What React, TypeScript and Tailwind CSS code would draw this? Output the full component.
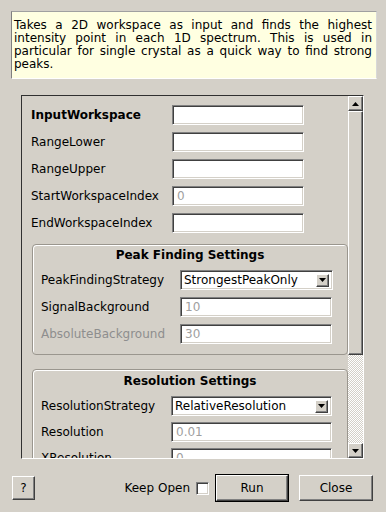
import React from "react";

const sunken =
  "border border-t-[#808080] border-l-[#808080] border-r-white border-b-white shadow-[inset_1px_1px_0_#404040,inset_-1px_-1px_0_#d4d0c8]";
const raised =
  "border border-t-white border-l-white border-r-[#404040] border-b-[#404040] shadow-[inset_-1px_-1px_0_#808080]";

function Field({ w, value }: { w: string; value?: string }) {
  return (
    <div className={`h-[20px] ${w} bg-white ${sunken} flex items-center pl-[4px] text-[#a0a0a0] shrink-0`}>
      {value}
    </div>
  );
}

function Combo({ w, value }: { w: string; value: string }) {
  return (
    <div className={`h-[20px] ${w} bg-white ${sunken} flex items-center justify-between pl-[3px] pr-[3px] shrink-0`}>
      <span className="text-black">{value}</span>
      <div className={`w-[13px] h-[13px] bg-[#d4d0c8] ${raised} flex items-center justify-center`}>
        <svg width="7" height="4" viewBox="0 0 7 4">
          <polygon points="0,0 7,0 3.5,4" fill="black" />
        </svg>
      </div>
    </div>
  );
}

function Row({
  label,
  lw,
  children,
  bold,
  dim,
}: {
  label: string;
  lw: string;
  children: React.ReactNode;
  bold?: boolean;
  dim?: boolean;
}) {
  return (
    <div className="flex items-center h-[20px]">
      <div
        className={`${lw} shrink-0 whitespace-nowrap ${bold ? "font-bold" : ""} ${
          dim ? "text-[#8e8e8e]" : "text-black"
        }`}
      >
        {label}
      </div>
      {children}
    </div>
  );
}

export default function App() {
  return (
    <div className="w-[386px] h-[512px] overflow-hidden bg-[#d4d0c8] font-['DejaVu_Sans',sans-serif] text-[12px] leading-[14px] text-black pt-[11px]">
      {/* description */}
      <div className="ml-[11px] w-[366px] h-[68px] bg-[#ffffe1] border border-t-[#a0a0a0] border-l-[#808080] border-r-[#d8d8d8] border-b-white pl-[2px] pr-[4px] pt-[7px] text-justify leading-[13px]">
        Takes a 2D workspace as input and finds the highest intensity point in each 1D spectrum. This is used in
        particular for single crystal as a quick way to find strong peaks.
      </div>

      {/* scroll frame */}
      <div className="ml-[21px] mt-[16px] w-[343px] h-[364px] border border-t-[#303030] border-l-[#303030] border-r-white border-b-white flex">
        <div className="w-[326px] h-full overflow-hidden pt-[9px]">
          <div className="flex flex-col gap-[7px] pl-[9px]">
            <Row label="InputWorkspace" lw="w-[141px]" bold>
              <Field w="w-[132px]" />
            </Row>
            <Row label="RangeLower" lw="w-[141px]">
              <Field w="w-[132px]" />
            </Row>
            <Row label="RangeUpper" lw="w-[141px]">
              <Field w="w-[132px]" />
            </Row>
            <Row label="StartWorkspaceIndex" lw="w-[141px]">
              <Field w="w-[132px]" value="0" />
            </Row>
            <Row label="EndWorkspaceIndex" lw="w-[141px]">
              <Field w="w-[132px]" />
            </Row>
          </div>

          {/* Peak finding group */}
          <div className="ml-[10px] mt-[11px] w-[316px] rounded-[4px] border border-[#9a968e] shadow-[inset_1px_1px_0_#ffffff] pt-[3px] pb-[10px] pl-[8px]">
            <div className="font-bold text-center pr-[8px] h-[14px]">Peak Finding Settings</div>
            <div className="flex flex-col gap-[7px] mt-[8px]">
              <Row label="PeakFindingStrategy" lw="w-[139px]">
                <Combo w="w-[153px]" value="StrongestPeakOnly" />
              </Row>
              <Row label="SignalBackground" lw="w-[139px]">
                <Field w="w-[152px]" value="10" />
              </Row>
              <Row label="AbsoluteBackground" lw="w-[139px]" dim>
                <Field w="w-[152px]" value="30" />
              </Row>
            </div>
          </div>

          {/* Resolution group */}
          <div className="ml-[10px] mt-[14px] w-[316px] rounded-[4px] border border-[#9a968e] shadow-[inset_1px_1px_0_#ffffff] pt-[4px] pb-[10px] pl-[8px]">
            <div className="font-bold text-center pr-[8px] h-[14px]">Resolution Settings</div>
            <div className="flex flex-col gap-[6px] mt-[8px]">
              <Row label="ResolutionStrategy" lw="w-[130px]">
                <Combo w="w-[161px]" value="RelativeResolution" />
              </Row>
              <Row label="Resolution" lw="w-[130px]">
                <Field w="w-[161px]" value="0.01" />
              </Row>
              <Row label="XResolution" lw="w-[130px]">
                <Field w="w-[161px]" value="0" />
              </Row>
            </div>
          </div>
        </div>

        {/* scrollbar */}
        <div className="w-[15px] h-full flex flex-col">
          <div className={`h-[15px] bg-[#d4d0c8] ${raised} flex items-center justify-center`}>
            <svg width="7" height="4" viewBox="0 0 7 4">
              <polygon points="3.5,0 7,4 0,4" fill="black" />
            </svg>
          </div>
          <div className={`h-[244px] bg-[#d4d0c8] ${raised}`} />
          <div className="flex-1 bg-[conic-gradient(#ffffff_25%,#d4d0c8_0_50%,#ffffff_0_75%,#d4d0c8_0)] bg-[length:2px_2px]" />
          <div className={`h-[15px] bg-[#d4d0c8] ${raised} flex items-center justify-center`}>
            <svg width="7" height="4" viewBox="0 0 7 4">
              <polygon points="0,0 7,0 3.5,4" fill="black" />
            </svg>
          </div>
        </div>
      </div>

      {/* bottom bar */}
      <div className="mt-[15px] h-[28px] flex items-center justify-between pl-[12px] pr-[13px]">
        <div className={`w-[23px] h-[24px] ${raised} flex items-center justify-center`}>?</div>
        <div className="flex items-center">
          <span>Keep Open</span>
          <div className={`ml-[6px] w-[13px] h-[13px] bg-white ${sunken}`} />
          <div className="ml-[6px] w-[74px] h-[28px] border border-black">
            <div className={`w-full h-full ${raised} flex items-center justify-center`}>Run</div>
          </div>
          <div className={`ml-[10px] w-[74px] h-[26px] ${raised} flex items-center justify-center`}>Close</div>
        </div>
      </div>
    </div>
  );
}
